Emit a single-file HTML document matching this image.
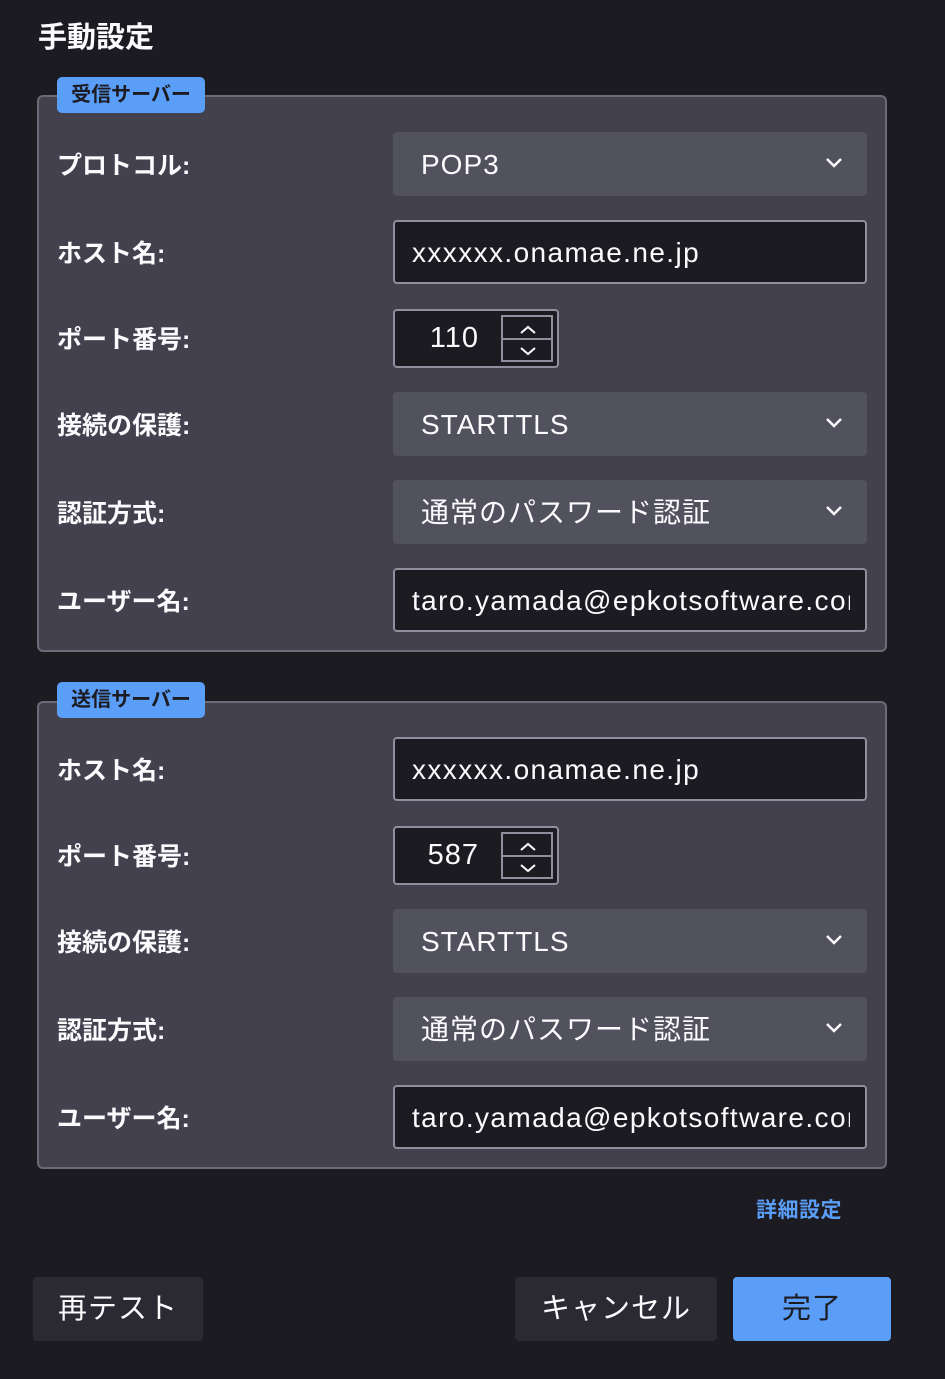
<!DOCTYPE html><html><head><meta charset="utf-8"><style>
body{margin:0;width:945px;height:1379px;background:#1c1b22;font-family:"Liberation Sans","Noto Sans CJK JP",sans-serif;color:#fbfbfe;position:relative;overflow:hidden}
.a{position:absolute}
h1{position:absolute;left:38px;top:14px;margin:0;font-size:29px;font-weight:bold}
.fs{position:absolute;left:37px;width:850px;background:#42414d;border:2px solid #6b6a75;border-radius:6px;box-sizing:border-box}
.lg{position:absolute;left:57px;width:148px;height:36px;background:#5b9ef7;border-radius:5px;color:#1c1b22;font-size:20px;font-weight:bold;line-height:36px;text-align:center}
.lb{position:absolute;left:57px;font-size:25px;font-weight:bold;transform:translateY(-50%)}
.sel{position:absolute;left:393px;width:474px;height:64px;background:#52515e;border-radius:4px;font-size:28px;line-height:66px;padding-left:28px;box-sizing:border-box;letter-spacing:1px}
.sel svg{position:absolute;right:24px;top:25px}
.in{position:absolute;left:393px;width:474px;height:64px;background:#1c1b22;border:2px solid #8f8f9d;border-radius:4px;font-size:28px;line-height:62px;padding-left:17px;box-sizing:border-box;white-space:nowrap;letter-spacing:1.4px}
.in span{display:block;width:438px;overflow:hidden}
.sp{position:absolute;left:393px;width:166px;height:59px;background:#1c1b22;border:2px solid #8f8f9d;border-radius:4px;box-sizing:border-box;font-size:29px}
.sp span{position:absolute;right:78px;top:11px;letter-spacing:1px}
.sp .b{position:absolute;left:106px;top:4px;width:52px;height:47px;border:2px solid #8f8f9d;box-sizing:border-box}
.sp .b i{position:absolute;left:0;right:0;top:21px;border-top:2px solid #8f8f9d}
.btn{position:absolute;top:1277px;height:64px;border-radius:4px;background:#2b2a33;font-size:29px;line-height:64px;text-align:center;letter-spacing:1px}
</style></head><body>
<h1>手動設定</h1>

<div class="fs" style="top:95px;height:557px"></div>
<div class="lg" style="top:77px">受信サーバー</div>
<div class="lb" style="top:164px">プロトコル:</div>
<div class="sel" style="top:132px">POP3<svg width="18" height="12"><path d="M2 2l7 7 7-7" stroke="#fbfbfe" stroke-width="2.5" fill="none"/></svg></div>
<div class="lb" style="top:252px">ホスト名:</div>
<div class="in" style="top:220px"><span>xxxxxx.onamae.ne.jp</span></div>
<div class="lb" style="top:338px">ポート番号:</div>
<div class="sp" style="top:309px"><span>110</span><div class="b"><i></i><svg class="a" style="left:15px;top:3px" width="20" height="40"><path d="M3 13l7-6 7 6M3 28l7 6 7-6" stroke="#fbfbfe" stroke-width="2" fill="none"/></svg></div></div>
<div class="lb" style="top:424px">接続の保護:</div>
<div class="sel" style="top:392px">STARTTLS<svg width="18" height="12"><path d="M2 2l7 7 7-7" stroke="#fbfbfe" stroke-width="2.5" fill="none"/></svg></div>
<div class="lb" style="top:512px">認証方式:</div>
<div class="sel" style="top:480px">通常のパスワード認証<svg width="18" height="12"><path d="M2 2l7 7 7-7" stroke="#fbfbfe" stroke-width="2.5" fill="none"/></svg></div>
<div class="lb" style="top:600px">ユーザー名:</div>
<div class="in" style="top:568px"><span>taro.yamada@epkotsoftware.com</span></div>

<div class="fs" style="top:701px;height:468px"></div>
<div class="lg" style="top:682px">送信サーバー</div>
<div class="lb" style="top:769px">ホスト名:</div>
<div class="in" style="top:737px"><span>xxxxxx.onamae.ne.jp</span></div>
<div class="lb" style="top:855px">ポート番号:</div>
<div class="sp" style="top:826px"><span>587</span><div class="b"><i></i><svg class="a" style="left:15px;top:3px" width="20" height="40"><path d="M3 13l7-6 7 6M3 28l7 6 7-6" stroke="#fbfbfe" stroke-width="2" fill="none"/></svg></div></div>
<div class="lb" style="top:941px">接続の保護:</div>
<div class="sel" style="top:909px">STARTTLS<svg width="18" height="12"><path d="M2 2l7 7 7-7" stroke="#fbfbfe" stroke-width="2.5" fill="none"/></svg></div>
<div class="lb" style="top:1029px">認証方式:</div>
<div class="sel" style="top:997px">通常のパスワード認証<svg width="18" height="12"><path d="M2 2l7 7 7-7" stroke="#fbfbfe" stroke-width="2.5" fill="none"/></svg></div>
<div class="lb" style="top:1117px">ユーザー名:</div>
<div class="in" style="top:1085px"><span>taro.yamada@epkotsoftware.com</span></div>

<div class="a" style="left:756px;top:1194px;font-size:21px;font-weight:bold;color:#5b9ef7;letter-spacing:0.5px">詳細設定</div>
<div class="btn" style="left:33px;width:170px">再テスト</div>
<div class="btn" style="left:515px;width:202px">キャンセル</div>
<div class="btn" style="left:733px;width:158px;background:#5b9ef7;color:#1c1b22">完了</div>
</body></html>
